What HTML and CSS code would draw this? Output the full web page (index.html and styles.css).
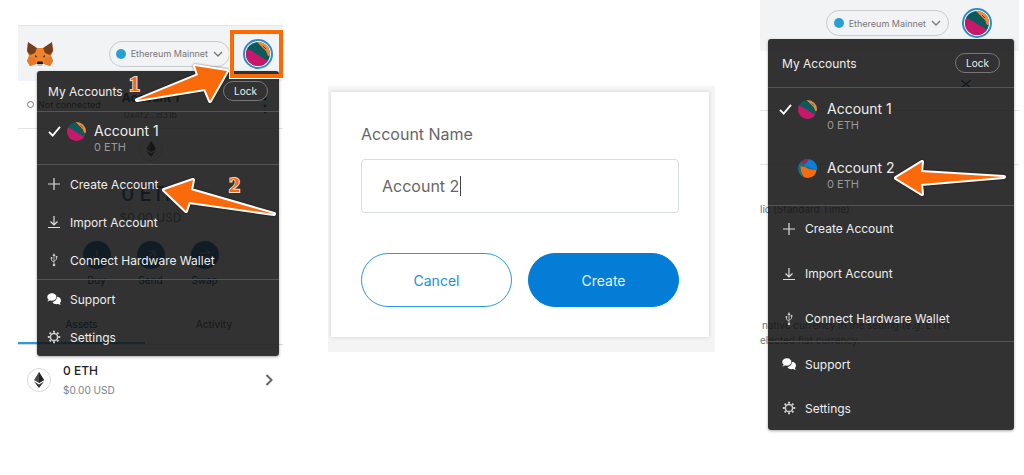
FILE: index.html
```html
<!DOCTYPE html>
<html lang="en">
<head>
<meta charset="utf-8">
<title>Create account</title>
<link rel="stylesheet" href="styles.css">
</head>
<body>
<svg class="defs" aria-hidden="true">
  <symbol id="jazzicon" viewBox="0 0 24 24">
    <g clip-path="url(#round)">
      <rect width="24" height="24" fill="#0d5a5c"/>
      <path d="M-1 7L4 8L22 19L20 30L-1 30Z" fill="#c9176a"/>
      <path d="M10 -1L14 3L20 9L22 14L26 13L26 -1Z" fill="#f28a38"/>
      <path d="M17 4L20 7" stroke="#0d5a5c" stroke-width="1"/>
    </g>
  </symbol>
  <symbol id="jazzicon-blue" viewBox="0 0 24 24">
    <g clip-path="url(#round)">
      <rect width="24" height="24" fill="#17717c"/>
      <path d="M4 -1H15L12 5L5 6Z" fill="#8a2a62"/>
      <path d="M10 6L15 0L25 3L25 14L20 13L13 10L8 9Z" fill="#0a80dc"/>
      <path d="M3 9L9 10L14 13L23 14L22 24L8 24L4 16Z" fill="#fb6a0a"/>
    </g>
  </symbol>
  <clipPath id="round"><circle cx="12" cy="12" r="12"/></clipPath>
  <symbol id="chevron-down" viewBox="0 0 10 6"><path d="M1 1l4 4 4-4" fill="none" stroke="#777" stroke-width="1.3"/></symbol>
  <symbol id="check" viewBox="0 0 14 12"><path d="M1 6.5l4 4L13 1" fill="none" stroke="#fff" stroke-width="2"/></symbol>
  <symbol id="plus" viewBox="0 0 14 14"><path d="M7 1v12M1 7h12" stroke="#ddd" stroke-width="1.2"/></symbol>
  <symbol id="import" viewBox="0 0 14 14"><path d="M7 1v8.500M3.500 6.500L7 10l3.500-3.500M1 12.500h12" fill="none" stroke="#ddd" stroke-width="1.2"/></symbol>
  <symbol id="usb" viewBox="0 0 14 14"><g fill="none" stroke="#ccc" stroke-width=".8"><path d="M7 3v8M7 9L4.500 7.500V5M7 8l2.500-1.500V4"/></g><path d="M7 0l1.500 3h-3z" fill="#ccc"/><circle cx="7" cy="12" r="1.300" fill="#ccc"/><circle cx="4.500" cy="5" r="1" fill="#ccc"/><rect x="8.700" y="3" width="1.700" height="1.700" fill="#ccc"/></symbol>
  <symbol id="chat" viewBox="0 0 16 14"><path d="M10.800 4.500C14 4.500 16 6.500 16 8.600c0 1.200-.6 2.200-1.300 2.900.2.900.7 1.500 1.200 2.100-1.200.1-2.400-.3-3.200-.9-2.800.6-5.700-.4-6.500-2.400 3.300-.3 5.500-2.900 4.600-5.800z" fill="#fff"/><path d="M5.600 0C8.700 0 11 2 11 4.600S8.700 9.200 5.600 9.200c-.8 0-1.500-.1-2.100-.3-.9.6-2 1-3.300.9.600-.6 1-1.300 1.200-2.100C.500 6.800 0 5.800 0 4.600 0 2 2.500 0 5.600 0z" fill="#fff" stroke="#303030" stroke-width=".6"/></symbol>
  <symbol id="gear" viewBox="0 0 14 14"><circle cx="7" cy="7" r="3.600" fill="none" stroke="#ccc" stroke-width="1.500"/><path d="M7 .8v2M7 11.200v2M.8 7h2M11.200 7h2M2.600 2.600L4 4M10 10l1.400 1.400M2.600 11.400L4 10M10 4l1.400-1.400" stroke="#ccc" stroke-width="2"/></symbol>
  <symbol id="ether" viewBox="0 0 10 16"><path d="M5 0L0 8l5 3 5-3z" fill="#4a4a4a"/><path d="M5 0v11l5-3z" fill="#222"/><path d="M0 9.500L5 16l5-6.500-5 3z" fill="#333"/></symbol>
</svg>

<main class="steps">
  <section class="wallet wallet-home">
    <header class="topbar">
      <svg class="fox" viewBox="0 0 26 24"><path d="M1 1L9 6H17L25 1L26 9L24 14L26 19L23 24L17 22H9L3 24L0 19L2 14L0 9Z" fill="#f0842c"/><path d="M1 0L10 6L8 11L3 13L0 9ZM25 0L16 6L18 11L23 13L26 9Z" fill="#753f1d"/><path d="M0 19L2 14L9 17L9 22L3 24ZM26 19L24 14L17 17L17 22L23 24Z" fill="#e8782a"/><path d="M8 13L10.500 14.500L8 15.500ZM18 13L15.500 14.500L18 15.500Z" fill="#3d3a3c"/><path d="M10.500 19.500h5l.5 2.500h-6z" fill="#191b20"/><path d="M10 22h6l-1 2h-4z" fill="#c8b8b0"/></svg>
      <button class="network" type="button"><span class="dot"></span>Ethereum Mainnet<svg class="caret"><use href="#chevron-down"/></svg></button>
      <button class="identicon" type="button" aria-label="Account 1"><svg><use href="#jazzicon"/></svg></button>
    </header>
    <div class="account-bar">
      <span class="status"><i></i>Not connected</span>
      <span class="selected"><b>Account 1</b><small>0x4f2…d31b</small></span>
      <span class="kebab">⋮</span>
    </div>
    <div class="overview">
      <span class="token"><svg><use href="#ether"/></svg></span>
      <strong>0 ETH</strong>
      <span class="fiat">$0.00 USD</span>
      <div class="actions">
        <span><svg viewBox="0 0 28 28"><circle cx="14" cy="14" r="14"/><path d="M14 9v10M10 15l4 4 4-4"/></svg>Buy</span>
        <span><svg viewBox="0 0 28 28"><circle cx="14" cy="14" r="14"/><path d="M10 18l8-8M12 10h6v6"/></svg>Send</span>
        <span><svg viewBox="0 0 28 28"><circle cx="14" cy="14" r="14"/><path d="M9 12h10l-3-3M19 16H9l3 3"/></svg>Swap</span>
      </div>
    </div>
    <div class="tabs"><span class="tab current">Assets</span><span class="tab">Activity</span></div>
    <div class="asset">
      <span class="token"><svg><use href="#ether"/></svg></span>
      <p><b>0 ETH</b><span>$0.00 USD</span></p>
      <svg class="arrow-right" viewBox="0 0 8 12"><path d="M1.500 1l5 5-5 5" fill="none" stroke="#666" stroke-width="2"/></svg>
    </div>

    <nav class="menu">
      <div class="menu-head"><h2>My Accounts</h2><button class="lock" type="button">Lock</button></div>
      <div class="accounts">
        <button class="account" type="button"><svg class="tick"><use href="#check"/></svg><svg class="face"><use href="#jazzicon"/></svg><span class="who">Account 1<small>0 ETH</small></span></button>
      </div>
      <div class="group">
        <button class="item" type="button"><svg><use href="#plus"/></svg>Create Account</button>
        <button class="item" type="button"><svg><use href="#import"/></svg>Import Account</button>
        <button class="item" type="button"><svg><use href="#usb"/></svg>Connect Hardware Wallet</button>
      </div>
      <div class="group">
        <button class="item" type="button"><svg><use href="#chat"/></svg>Support</button>
        <button class="item" type="button"><svg><use href="#gear"/></svg>Settings</button>
      </div>
    </nav>

    <span class="frame"></span>
    <svg class="pointer pointer-1" viewBox="0 0 100 44"><path d="M95 9L63 4l3 9L5 38l68-11 5 12z"/></svg>
    <svg class="pointer pointer-2" viewBox="0 0 120 44"><path d="M5 15L34 5l-2 10 83 24-85-12-3 9z"/></svg>
    <span class="number number-1">1</span>
    <span class="number number-2">2</span>
  </section>

  <section class="backdrop">
    <form class="dialog">
      <label for="account-name">Account Name</label>
      <div class="field"><input id="account-name" type="text" value="Account 2"><span class="cursor"></span></div>
      <div class="buttons">
        <button class="cancel" type="button">Cancel</button>
        <button class="create" type="button">Create</button>
      </div>
    </form>
  </section>

  <section class="wallet wallet-result">
    <header class="topbar">
      <button class="network" type="button"><span class="dot"></span>Ethereum Mainnet<svg class="caret"><use href="#chevron-down"/></svg></button>
      <button class="identicon" type="button" aria-label="Account 1"><svg><use href="#jazzicon"/></svg></button>
    </header>
    <div class="settings">
      <div class="settings-head"><svg class="close" viewBox="0 0 10 10"><path d="M0 1l10 8M10 1L0 9" stroke="#024a80" stroke-width="1.500"/></svg></div>
      <div class="settings-row"></div>
      <p class="time">lic (Standard Time)</p>
      <p class="hint">native currency in the setting (e.g. ETH)</p>
      <p class="hint more">elected fiat currency.</p>
    </div>

    <nav class="menu">
      <div class="menu-head"><h2>My Accounts</h2><button class="lock" type="button">Lock</button></div>
      <div class="accounts">
        <button class="account" type="button"><svg class="tick"><use href="#check"/></svg><svg class="face"><use href="#jazzicon"/></svg><span class="who">Account 1<small>0 ETH</small></span></button>
        <button class="account" type="button"><svg class="tick"></svg><svg class="face"><use href="#jazzicon-blue"/></svg><span class="who">Account 2<small>0 ETH</small></span></button>
      </div>
      <div class="group">
        <button class="item" type="button"><svg><use href="#plus"/></svg>Create Account</button>
        <button class="item" type="button"><svg><use href="#import"/></svg>Import Account</button>
        <button class="item" type="button"><svg><use href="#usb"/></svg>Connect Hardware Wallet</button>
      </div>
      <div class="group">
        <button class="item" type="button"><svg><use href="#chat"/></svg>Support</button>
        <button class="item" type="button"><svg><use href="#gear"/></svg>Settings</button>
      </div>
    </nav>
    <svg class="pointer pointer-3" viewBox="0 0 120 44"><path d="M6 22L32 6l-1 10 83 5-83 7 1 10z"/></svg>
  </section>
</main>
</body>
</html>
```
FILE: styles.css
```css
* { box-sizing: border-box; }

body {
  min-height: 100vh;
  margin: 0;
  background: #fff;
  font-family: Inter, "Liberation Sans", sans-serif;
  font-size: 12px;
  color: #555;
}

h2, p { margin: 0; font-weight: 400; }

button {
  padding: 0;
  border: 0;
  background: none;
  color: inherit;
  font: inherit;
}

.defs { position: absolute; width: 0; height: 0; }

.steps {
  display: grid;
  grid-template-columns: 265fr 387fr 259fr;
  column-gap: 45px;
  align-items: start;
  padding: 0 5px 0 18px;
}

/* Wallet window */
.wallet { position: relative; }
.wallet-home { margin-top: 25px; }
.wallet-result { padding-bottom: 90px; }

.topbar {
  display: flex;
  align-items: center;
  height: 56px;
  padding: 0 10px 0 9px;
  background: #f2f3f4;
}
.wallet-home .topbar { border-top: 1px solid #e4e5e6; }
.wallet-result .topbar { align-items: flex-start; height: 51px; padding: 8px 27px 0 0; }

.fox { width: 26px; height: 24px; }

.network {
  display: flex;
  align-items: center;
  gap: 5px;
  height: 26px;
  margin-left: auto;
  padding: 0 6px;
  border: 1px solid #c8cacc;
  border-radius: 13px;
  color: #777;
  font-size: 9px;
  white-space: nowrap;
}
.wallet-result .network { margin-top: 2px; padding: 0 7px; }
.dot { width: 10px; height: 10px; border-radius: 50%; background: #29a0d4; }
.caret { width: 10px; height: 6px; }

.identicon {
  display: grid;
  place-items: center;
  width: 30px;
  height: 30px;
  margin-left: 13px;
  border: 2px solid #2b8ccb;
  border-radius: 50%;
  background: #fff;
}
.identicon svg { width: 24px; height: 24px; }

/* Home screen */
.account-bar {
  display: grid;
  grid-template-columns: 1fr auto 1fr;
  align-items: center;
  height: 48px;
  padding: 0 9px;
  border-bottom: 1px solid #e4e5e6;
}
.status { display: flex; align-items: center; gap: 4px; font-size: 9px; color: #444; white-space: nowrap; }
.status i { width: 7px; height: 7px; border: 1px solid #777; border-radius: 50%; }
.selected { display: grid; gap: 4px; justify-items: center; color: #024a80; font-size: 12px; }
.selected small { font-size: 9px; color: #777; }
.kebab { justify-self: end; font-size: 18px; font-weight: 700; color: #024a80; }

.overview { display: flex; flex-direction: column; align-items: center; height: 183px; padding-top: 8px; }
.token {
  display: grid;
  place-items: center;
  width: 24px;
  height: 24px;
  border: 1px solid #d6d9dc;
  border-radius: 50%;
}
.token svg { width: 10px; height: 16px; }
.overview strong { margin-top: 19px; font-size: 20px; line-height: 28px; font-weight: 500; color: #024a80; }
.fiat { font-size: 12px; line-height: 20px; color: #6a737d; }
.actions { display: flex; gap: 26px; margin-top: 13px; font-size: 10px; font-weight: 500; color: #024a80; }
.actions span { display: grid; justify-items: center; gap: 5px; width: 28px; }
.actions svg { width: 28px; height: 28px; }
.actions circle { fill: #035a9d; }
.actions path { fill: none; stroke: #9cc; stroke-width: 1; }

.tabs { display: grid; grid-template-columns: 127fr 138fr; border-bottom: 1px solid #d6d9dc; }
.tab { height: 32px; padding-top: 6px; font-size: 10px; font-weight: 500; text-align: center; }
.tab.current { border-bottom: 2px solid #2b9be0; color: #024a80; }

.asset { display: flex; align-items: center; gap: 12px; padding: 17px 10px 0 9px; }
.asset p { display: grid; gap: 2px; flex: 1; font-size: 10px; line-height: 16px; color: #7b8087; }
.asset b { font-size: 12px; line-height: 18px; font-weight: 500; color: #222; }
.arrow-right { width: 8px; height: 12px; }

/* Settings screen */
.settings-head { height: 60px; padding: 26px 48px 0 0; border-bottom: 1px solid #e4e5e6; text-align: right; }
.close { width: 10px; height: 10px; }
.settings-row { height: 54px; border-bottom: 1px solid #e4e5e6; }
.settings p { font-size: 10px; line-height: 14px; color: #6a737d; white-space: nowrap; }
.settings .time { padding-top: 37px; }
.settings .hint { padding: 102px 0 0 2px; }
.settings .more { padding: 1px 0 0; }

/* Account menu, floating over the wallet */
.menu {
  position: absolute;
  top: 46px;
  left: 19px;
  right: 4px;
  border-radius: 3px;
  background: rgba(20, 20, 20, .87);
  box-shadow: 0 1px 3px rgba(0, 0, 0, .35);
  color: #eee;
}
.wallet-result .menu { top: 39px; left: 8px; right: 5px; }

.menu-head {
  display: flex;
  align-items: center;
  justify-content: space-between;
  height: 40px;
  padding: 0 11px;
}
.wallet-result .menu-head { height: 48px; padding: 0 14px; }
.menu-head h2 { font-size: 12px; }

.lock {
  width: 45px;
  height: 20px;
  border: 1px solid #777;
  border-radius: 10px;
  font-size: 10px;
}

.accounts, .group { border-top: 1px solid #555; }
.accounts { display: grid; gap: 1px; padding: 0 11px; }
.account { display: flex; align-items: flex-start; width: 100%; height: 52px; padding-top: 10px; text-align: left; }
.tick { width: 13px; height: 11px; margin: 4px 6px 0 0; }
.face { width: 19px; height: 19px; margin-right: 8px; }
.who { display: grid; font-size: 14px; line-height: 18px; }
.who small { font-size: 11px; line-height: 14px; color: #999; }
.wallet-result .account { height: 58px; padding-top: 12px; }
.wallet-result .face { margin-right: 10px; }

.item {
  display: flex;
  align-items: center;
  gap: 9px;
  width: 100%;
  height: 38px;
  padding-left: 10px;
  font-size: 12px;
  white-space: nowrap;
}
.item svg { width: 14px; height: 14px; }
.wallet-result .item { height: 45px; padding-left: 14px; }
.wallet-result .group:last-child .item { height: 44px; }

/* Tutorial marks */
.frame {
  position: absolute;
  top: 5px;
  right: 0;
  width: 53px;
  height: 48px;
  border: 4px solid #ff6a00;
  outline: 1px solid #fff;
}
.pointer { position: absolute; overflow: visible; filter: drop-shadow(0 0 1px rgba(0, 0, 0, .5)); }
.pointer path { fill: #fb6a0a; stroke: #fff; stroke-width: 4; stroke-linejoin: round; paint-order: stroke; }
.pointer-1 { top: 37px; right: 51px; width: 100px; height: 44px; }
.pointer-2 { top: 150px; right: 4px; width: 120px; height: 44px; }
.pointer-3 { top: 156px; right: 9px; width: 120px; height: 44px; }

.number {
  position: absolute;
  color: #fb6a0a;
  font: 700 22px/22px "Liberation Serif", serif;
  -webkit-text-stroke: 2px #f4dccb;
  paint-order: stroke;
}
.number-1 { top: 48px; right: 143px; }
.number-2 { top: 149px; right: 43px; }

/* Name dialog */
.backdrop { margin-top: 86px; padding: 6px 6px 15px 3px; background: #f4f4f4; }
.dialog { padding: 32px 30px 30px 30px; background: #fff; box-shadow: 0 0 4px rgba(0, 0, 0, .15); }
.dialog label { display: block; font-size: 16px; line-height: 20px; color: #666; }
.field { position: relative; margin: 15px 0 40px; }
.field input {
  display: block;
  width: 100%;
  height: 54px;
  padding: 0 20px;
  border: 1px solid #d8dde2;
  border-radius: 4px;
  background: #fff;
  color: #666;
  font: inherit;
  font-size: 16px;
}
.cursor { position: absolute; top: 17px; left: 99px; width: 1px; height: 20px; background: #444; }
.buttons { display: grid; grid-template-columns: 1fr 1fr; gap: 16px; }
.buttons button { height: 54px; border: 1px solid #2b9be0; border-radius: 27px; font-size: 14px; color: #1a8fd8; }
.buttons .create { border-color: #037dd6; background: #037dd6; color: #e6f3fc; }
```
